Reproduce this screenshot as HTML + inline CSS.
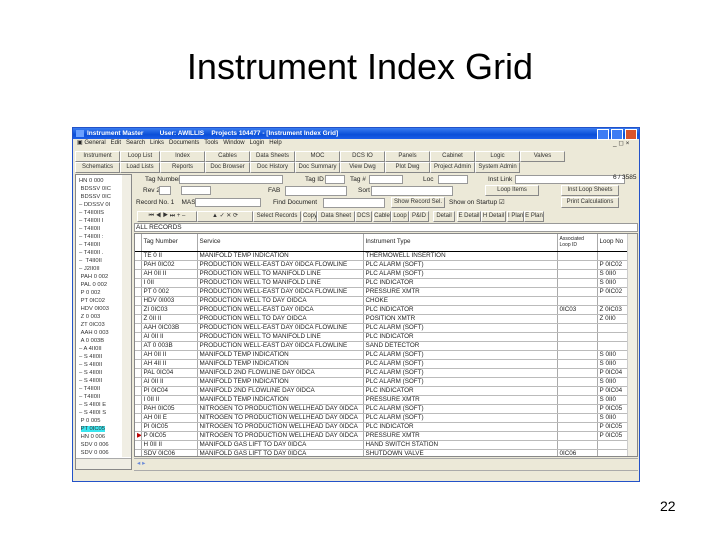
<!DOCTYPE html><html><head><style>
body{margin:0;width:720px;height:540px;background:#fff;position:relative;overflow:hidden;font-family:"Liberation Sans",sans-serif}
.a{position:absolute}
h1{position:absolute;top:46px;left:0;width:720px;text-align:center;font-weight:normal;font-size:36px;margin:0;color:#000}
.win{left:72px;top:127px;width:568px;height:355px;background:#ece9d8;border:1px solid #2352c8;box-sizing:border-box;overflow:hidden}
.t{font-size:6.5px;white-space:nowrap;line-height:9px;color:#222}
.btn{position:absolute;background:#ece9d8;border:1px solid #888;border-top-color:#fff;border-left-color:#fff;box-sizing:border-box;font-size:6px;text-align:center;line-height:9px;color:#333;white-space:nowrap;overflow:hidden}
.fld{position:absolute;background:#fff;border:1px solid #999;box-sizing:border-box}
table{border-collapse:collapse;font-size:6.3px;color:#222}
td{border-right:1px solid #aaa;border-bottom:1px solid #bbb;height:8px;padding:0 2px;white-space:nowrap;overflow:hidden;line-height:8px}
</style></head><body>
<h1>Instrument Index Grid</h1>
<div class="a win">
 <div class="a" style="left:0;top:0;width:566px;height:11px;background:linear-gradient(#3a7cf0,#0a4fd8 60%,#1c5ee8)"></div>
 <div class="a t" style="left:14px;top:1px;color:#fff;font-weight:bold;font-size:6.5px">Instrument Master &nbsp;&nbsp;&nbsp;&nbsp;&nbsp;&nbsp;&nbsp; User: AWILLIS &nbsp;&nbsp; Projects 104477 - [Instrument Index Grid]</div>
 <div class="a" style="left:3px;top:2px;width:8px;height:7px;background:#6aa0ff"></div>
 <div class="a" style="left:524px;top:1px;width:10px;height:9px;background:#3c7cf4;border:1px solid #fff"></div>
 <div class="a" style="left:538px;top:1px;width:10px;height:9px;background:#3c7cf4;border:1px solid #fff"></div>
 <div class="a" style="left:552px;top:1px;width:10px;height:9px;background:#d8532c;border:1px solid #fff"></div>
 <div class="a t" style="left:4px;top:11px;font-size:6px">▣ General &nbsp; Edit &nbsp; Search &nbsp; Links &nbsp; Documents &nbsp; Tools &nbsp; Window &nbsp; Login &nbsp; Help</div>
 <div class="a t" style="left:540px;top:11px">_ ◻ ×</div>
 <div class="btn" style="left:2px;top:23px;width:45px;height:11px">Instrument</div>
 <div class="btn" style="left:47px;top:23px;width:40px;height:11px">Loop List</div>
 <div class="btn" style="left:87px;top:23px;width:45px;height:11px">Index</div>
 <div class="btn" style="left:132px;top:23px;width:45px;height:11px">Cables</div>
 <div class="btn" style="left:177px;top:23px;width:45px;height:11px">Data Sheets</div>
 <div class="btn" style="left:222px;top:23px;width:45px;height:11px">MOC</div>
 <div class="btn" style="left:267px;top:23px;width:45px;height:11px">DCS IO</div>
 <div class="btn" style="left:312px;top:23px;width:45px;height:11px">Panels</div>
 <div class="btn" style="left:357px;top:23px;width:45px;height:11px">Cabinet</div>
 <div class="btn" style="left:402px;top:23px;width:45px;height:11px">Logic</div>
 <div class="btn" style="left:447px;top:23px;width:45px;height:11px">Valves</div>
 <div class="btn" style="left:2px;top:34px;width:45px;height:11px">Schematics</div>
 <div class="btn" style="left:47px;top:34px;width:40px;height:11px">Load Lists</div>
 <div class="btn" style="left:87px;top:34px;width:45px;height:11px">Reports</div>
 <div class="btn" style="left:132px;top:34px;width:45px;height:11px">Doc Browser</div>
 <div class="btn" style="left:177px;top:34px;width:45px;height:11px">Doc History</div>
 <div class="btn" style="left:222px;top:34px;width:45px;height:11px">Doc Summary</div>
 <div class="btn" style="left:267px;top:34px;width:45px;height:11px">View Dwg</div>
 <div class="btn" style="left:312px;top:34px;width:45px;height:11px">Plot Dwg</div>
 <div class="btn" style="left:357px;top:34px;width:45px;height:11px">Project Admin</div>
 <div class="btn" style="left:402px;top:34px;width:45px;height:11px">System Admin</div>
 <!-- left tree -->
 <div class="a" style="left:2px;top:46px;width:57px;height:296px;background:#fff;border:1px solid #888;box-sizing:border-box;overflow:hidden">
 <div class="a" style="left:46px;top:0;width:9px;height:282px;background:#f0eee4"></div>
 <div class="a" style="left:0;top:283px;width:55px;height:11px;background:#f0eee4;border-top:1px solid #aaa"></div>
 <div class="a t" style="left:3px;top:2px;font-size:5.8px;line-height:8px;color:#333">
 HN 0 000<br>&nbsp;BDSSV 0IC<br>&nbsp;BDSSV 0IC<br>– DDSSV 0I<br>– T4II0IIS<br>– T4II0II I<br>– T4II0II<br>– T4II0II :<br>– T4II0II<br>– T4II0II .<br>– &nbsp;T4II0II<br>– J2II0II<br>&nbsp;PAH 0 002<br>&nbsp;PAL 0 002<br>&nbsp;P 0 002<br>&nbsp;PT 0IC02<br>&nbsp;HDV 0I003<br>&nbsp;Z 0 003<br>&nbsp;ZT 0IC03<br>&nbsp;AAH 0 003<br>&nbsp;A 0 003B<br>– A 4II0II<br>– S 4II0II<br>– S 4II0II<br>– S 4II0II<br>– S 4II0II<br>– T4II0II<br>– T4II0II<br>– S 4II0I E<br>– S 4II0I S<br>&nbsp;P 0 005<br>&nbsp;<span style="background:#39e6f0">PT 0IC05</span><br>&nbsp;HN 0 006<br>&nbsp;SDV 0 006<br>&nbsp;SDV 0 006</div>
 </div>
 <!-- main form -->
 <div class="a t" style="left:72px;top:47px">Tag Number</div><div class="fld" style="left:106px;top:47px;width:104px;height:9px"></div>
 <div class="a t" style="left:232px;top:47px">Tag ID</div><div class="fld" style="left:252px;top:47px;width:20px;height:9px"></div>
 <div class="a t" style="left:277px;top:47px">Tag #</div><div class="fld" style="left:296px;top:47px;width:34px;height:9px"></div>
 <div class="a t" style="left:350px;top:47px">Loc</div><div class="fld" style="left:365px;top:47px;width:30px;height:9px"></div>
 <div class="a t" style="left:415px;top:47px">Inst Link</div><div class="fld" style="left:442px;top:47px;width:110px;height:9px"></div>
 <div class="a t" style="left:70px;top:58px">Rev 2</div><div class="fld" style="left:86px;top:58px;width:12px;height:9px"></div>
 <div class="fld" style="left:108px;top:58px;width:30px;height:9px"></div>
 <div class="a t" style="left:195px;top:58px">FAB</div><div class="fld" style="left:212px;top:58px;width:62px;height:10px"></div>
 <div class="a t" style="left:285px;top:58px">Sort</div><div class="fld" style="left:298px;top:58px;width:82px;height:10px"></div>
 <div class="btn" style="left:412px;top:57px;width:54px;height:11px">Loop Items</div>
 <div class="btn" style="left:488px;top:57px;width:58px;height:11px">Inst Loop Sheets</div>
 <div class="a t" style="left:63px;top:70px">Record No. 1 &nbsp;&nbsp; MASTER</div><div class="fld" style="left:122px;top:70px;width:66px;height:9px"></div>
 <div class="a t" style="left:200px;top:70px">Find Document</div><div class="fld" style="left:250px;top:70px;width:62px;height:10px"></div>
 <div class="btn" style="left:318px;top:69px;width:54px;height:11px">Show Record Sel.</div>
 <div class="a t" style="left:376px;top:70px">Show on Startup ☑</div>
 <div class="btn" style="left:488px;top:69px;width:58px;height:11px">Print Calculations</div>
 <div class="a t" style="left:540px;top:45px">6 / 3585</div>
 <!-- nav -->
 <div class="btn" style="left:64px;top:83px;width:60px;height:11px">⏮ ◀ ▶ ⏭ + –</div>
 <div class="btn" style="left:124px;top:83px;width:56px;height:11px">▲ ✓ ✕ ⟳</div>
 <div class="btn" style="left:180px;top:83px;width:48px;height:11px">Select Records</div>
 <div class="btn" style="left:229px;top:83px;width:15px;height:11px">Copy</div>
 <div class="btn" style="left:244px;top:83px;width:38px;height:11px">Data Sheet</div>
 <div class="btn" style="left:282px;top:83px;width:17px;height:11px">DCS</div>
 <div class="btn" style="left:300px;top:83px;width:18px;height:11px">Cable</div>
 <div class="btn" style="left:318px;top:83px;width:18px;height:11px">Loop</div>
 <div class="btn" style="left:336px;top:83px;width:20px;height:11px">P&amp;ID</div>
 <div class="btn" style="left:360px;top:83px;width:22px;height:11px">Detail</div>
 <div class="btn" style="left:384px;top:83px;width:24px;height:11px">E Detail</div>
 <div class="btn" style="left:408px;top:83px;width:25px;height:11px">H Detail</div>
 <div class="btn" style="left:434px;top:83px;width:17px;height:11px">I Plan</div>
 <div class="btn" style="left:451px;top:83px;width:20px;height:11px">E Plan</div>
 <div class="fld" style="left:61px;top:95px;width:504px;height:9px"></div>
 <div class="a t" style="left:63px;top:95px">ALL RECORDS</div>
 <!-- grid -->
 <div class="a" style="left:61px;top:105px;width:504px;height:224px;background:#fff;border:1px solid #888;box-sizing:border-box;overflow:hidden">
 <table style="width:495px;table-layout:fixed">
 <colgroup><col style="width:6px"><col style="width:56px"><col style="width:166px"><col style="width:194px"><col style="width:40px"><col style="width:33px"></colgroup>
 <tr style="height:17px;background:#fff"><td style="border-bottom:1px solid #000"></td><td style="border-bottom:1px solid #000">Tag Number</td><td style="border-bottom:1px solid #000">Service</td><td style="border-bottom:1px solid #000">Instrument Type</td><td style="border-bottom:1px solid #000;font-size:5px;line-height:6px">Associated<br>Loop ID</td><td style="border-bottom:1px solid #000">Loop No</td></tr>
 <tr><td></td><td>TE 0 II</td><td>MANIFOLD TEMP INDICATION</td><td>THERMOWELL INSERTION</td><td></td><td></td></tr>
 <tr><td></td><td>PAH 0IC02</td><td>PRODUCTION WELL-EAST DAY 0IDCA FLOWLINE</td><td>PLC ALARM (SOFT)</td><td></td><td>P 0IC02</td></tr>
 <tr><td></td><td>AH 0II II</td><td>PRODUCTION WELL TO MANIFOLD LINE</td><td>PLC ALARM (SOFT)</td><td></td><td>S 0II0</td></tr>
 <tr><td></td><td>I 0II</td><td>PRODUCTION WELL TO MANIFOLD LINE</td><td>PLC INDICATOR</td><td></td><td>S 0II0</td></tr>
 <tr><td></td><td>PT 0 002</td><td>PRODUCTION WELL-EAST DAY 0IDCA FLOWLINE</td><td>PRESSURE XMTR</td><td></td><td>P 0IC02</td></tr>
 <tr><td></td><td>HDV 0I003</td><td>PRODUCTION WELL TO DAY OIDCA</td><td>CHOKE</td><td></td><td></td></tr>
 <tr><td></td><td>ZI 0IC03</td><td>PRODUCTION WELL-EAST DAY 0IDCA</td><td>PLC INDICATOR</td><td>0IC03</td><td>Z 0IC03</td></tr>
 <tr><td></td><td>Z 0II II</td><td>PRODUCTION WELL TO DAY OIDCA</td><td>POSITION XMTR</td><td></td><td>Z 0II0</td></tr>
 <tr><td></td><td>AAH 0IC03B</td><td>PRODUCTION WELL-EAST DAY 0IDCA FLOWLINE</td><td>PLC ALARM (SOFT)</td><td></td><td></td></tr>
 <tr><td></td><td>AI 0II II</td><td>PRODUCTION WELL TO MANIFOLD LINE</td><td>PLC INDICATOR</td><td></td><td></td></tr>
 <tr><td></td><td>AT 0 003B</td><td>PRODUCTION WELL-EAST DAY 0IDCA FLOWLINE</td><td>SAND DETECTOR</td><td></td><td></td></tr>
 <tr><td></td><td>AH 0II II</td><td>MANIFOLD TEMP INDICATION</td><td>PLC ALARM (SOFT)</td><td></td><td>S 0II0</td></tr>
 <tr><td></td><td>AH 4II II</td><td>MANIFOLD TEMP INDICATION</td><td>PLC ALARM (SOFT)</td><td></td><td>S 0II0</td></tr>
 <tr><td></td><td>PAL 0IC04</td><td>MANIFOLD 2ND FLOWLINE DAY 0IDCA</td><td>PLC ALARM (SOFT)</td><td></td><td>P 0IC04</td></tr>
 <tr><td></td><td>AI 0II II</td><td>MANIFOLD TEMP INDICATION</td><td>PLC ALARM (SOFT)</td><td></td><td>S 0II0</td></tr>
 <tr><td></td><td>PI 0IC04</td><td>MANIFOLD 2ND FLOWLINE DAY 0IDCA</td><td>PLC INDICATOR</td><td></td><td>P 0IC04</td></tr>
 <tr><td></td><td>I 0II II</td><td>MANIFOLD TEMP INDICATION</td><td>PRESSURE XMTR</td><td></td><td>S 0II0</td></tr>
 <tr><td></td><td>PAH 0IC05</td><td>NITROGEN TO PRODUCTION WELLHEAD DAY 0IDCA</td><td>PLC ALARM (SOFT)</td><td></td><td>P 0IC05</td></tr>
 <tr><td></td><td>AH 0II E</td><td>NITROGEN TO PRODUCTION WELLHEAD DAY 0IDCA</td><td>PLC ALARM (SOFT)</td><td></td><td>S 0II0</td></tr>
 <tr><td></td><td>PI 0IC05</td><td>NITROGEN TO PRODUCTION WELLHEAD DAY 0IDCA</td><td>PLC INDICATOR</td><td></td><td>P 0IC05</td></tr>
 <tr><td style="color:#b00">▶</td><td>P 0IC05</td><td>NITROGEN TO PRODUCTION WELLHEAD DAY 0IDCA</td><td>PRESSURE XMTR</td><td></td><td>P 0IC05</td></tr>
 <tr><td></td><td>H 0II II</td><td>MANIFOLD GAS LIFT TO DAY 0IDCA</td><td>HAND SWITCH STATION</td><td></td><td></td></tr>
 <tr><td></td><td>SDV 0IC06</td><td>MANIFOLD GAS LIFT TO DAY 0IDCA</td><td>SHUTDOWN VALVE</td><td>0IC06</td><td></td></tr>
 <tr><td></td><td>SDV 0II II</td><td>MANIFOLD GAS LIFT TO DAY 0IDCA</td><td>PLC MANIFOLD</td><td></td><td></td></tr>
 </table>
 <div class="a" style="right:0;top:0;width:9px;height:222px;background:#f0eee4;border-left:1px solid #ccc"></div>
 </div>
 <div class="a" style="left:61px;top:330px;width:504px;height:11px;background:#ece9d8;border-top:1px solid #aaa;box-sizing:border-box"></div>
 <div class="a t" style="left:64px;top:331px;color:#6a8ad8">◂ ▸</div>
 <div class="a" style="left:61px;top:342px;width:504px;height:10px;background:#ece9d8;border-top:1px solid #aaa"></div>
</div>
<div class="a" style="left:660px;top:498px;font-size:14px">22</div>
</body></html>
